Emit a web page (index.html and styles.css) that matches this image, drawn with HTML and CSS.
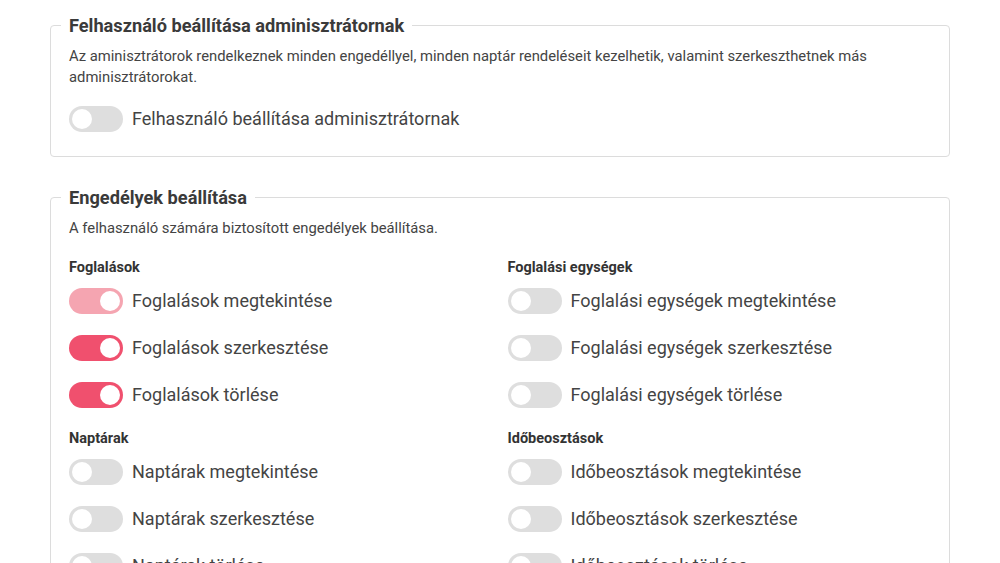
FILE: index.html
```html
<!DOCTYPE html>
<html lang="hu">
<head>
<meta charset="utf-8">
<link rel="stylesheet" href="styles.css">
</head>
<body>
<div class="page">
  <fieldset class="panel">
    <legend class="panel-title">Felhasználó beállítása adminisztrátornak</legend>
    <p class="panel-desc">Az aminisztrátorok rendelkeznek minden engedéllyel, minden naptár rendeléseit kezelhetik, valamint szerkeszthetnek más adminisztrátorokat.</p>
    <label class="toggle-row first">
      <span class="toggle"><span class="knob"></span></span>
      <span class="toggle-label">Felhasználó beállítása adminisztrátornak</span>
    </label>
  </fieldset>

  <fieldset class="panel">
    <legend class="panel-title">Engedélyek beállítása</legend>
    <p class="panel-desc">A felhasználó számára biztosított engedélyek beállítása.</p>
    <div class="perm-grid">
      <div class="group">
        <div class="group-title">Foglalások</div>
        <label class="toggle-row"><span class="toggle on-light"><span class="knob"></span></span><span class="toggle-label">Foglalások megtekintése</span></label>
        <label class="toggle-row"><span class="toggle on"><span class="knob"></span></span><span class="toggle-label">Foglalások szerkesztése</span></label>
        <label class="toggle-row"><span class="toggle on"><span class="knob"></span></span><span class="toggle-label">Foglalások törlése</span></label>
      </div>
      <div class="group">
        <div class="group-title">Foglalási egységek</div>
        <label class="toggle-row"><span class="toggle"><span class="knob"></span></span><span class="toggle-label">Foglalási egységek megtekintése</span></label>
        <label class="toggle-row"><span class="toggle"><span class="knob"></span></span><span class="toggle-label">Foglalási egységek szerkesztése</span></label>
        <label class="toggle-row"><span class="toggle"><span class="knob"></span></span><span class="toggle-label">Foglalási egységek törlése</span></label>
      </div>
      <div class="group">
        <div class="group-title">Naptárak</div>
        <label class="toggle-row"><span class="toggle"><span class="knob"></span></span><span class="toggle-label">Naptárak megtekintése</span></label>
        <label class="toggle-row"><span class="toggle"><span class="knob"></span></span><span class="toggle-label">Naptárak szerkesztése</span></label>
        <label class="toggle-row"><span class="toggle"><span class="knob"></span></span><span class="toggle-label">Naptárak törlése</span></label>
      </div>
      <div class="group">
        <div class="group-title">Időbeosztások</div>
        <label class="toggle-row"><span class="toggle"><span class="knob"></span></span><span class="toggle-label">Időbeosztások megtekintése</span></label>
        <label class="toggle-row"><span class="toggle"><span class="knob"></span></span><span class="toggle-label">Időbeosztások szerkesztése</span></label>
        <label class="toggle-row"><span class="toggle"><span class="knob"></span></span><span class="toggle-label">Időbeosztások törlése</span></label>
      </div>
    </div>
  </fieldset>
</div>
</body>
</html>
```

FILE: styles.css
```css
* { box-sizing: border-box; }
html, body { margin: 0; padding: 0; background: #fff; }
body {
  font-family: Roboto, "Noto Sans", Arial, sans-serif;
  color: #444;
}
.page {
  width: 900px;
  margin: 0 auto;
  padding-top: 12px;
}
.panel {
  margin: 0 0 27px 0;
  padding: 7px 18px 24px 18px;
  border: 1px solid #dcdcdc;
  border-radius: 4px;
  min-width: 0;
}
.panel-title {
  margin-left: -8px;
  padding: 0 8px;
  font-size: 18.2px;
  line-height: 27px;
  font-weight: 700;
  color: #3a3a3a;
}
.panel-desc {
  margin: 0;
  font-size: 14.8px;
  line-height: 21px;
  color: #444;
}
.toggle-row {
  display: flex;
  align-items: center;
  height: 27px;
  margin-top: 20px;
  cursor: pointer;
}
.toggle-row.first { margin-top: 17px; }
.group-title + .toggle-row { margin-top: 9px; }
.toggle {
  position: relative;
  flex: none;
  width: 54px;
  height: 26px;
  border-radius: 13px;
  background: #dedede;
}
.toggle .knob {
  position: absolute;
  top: 3px;
  left: 3px;
  width: 20px;
  height: 20px;
  border-radius: 50%;
  background: #fff;
}
.toggle.on { background: #f0506e; }
.toggle.on-light { background: #f5a5b1; }
.toggle.on .knob, .toggle.on-light .knob { left: 31px; }
.toggle-label {
  margin-left: 9px;
  font-size: 18px;
  line-height: 27px;
  color: #444;
}
.perm-grid {
  display: grid;
  grid-template-columns: 1fr 1fr;
  column-gap: 15px;
  row-gap: 20px;
  margin-top: 18px;
}
.group-title {
  font-size: 14.5px;
  line-height: 21px;
  font-weight: 700;
  color: #333;
}
```
